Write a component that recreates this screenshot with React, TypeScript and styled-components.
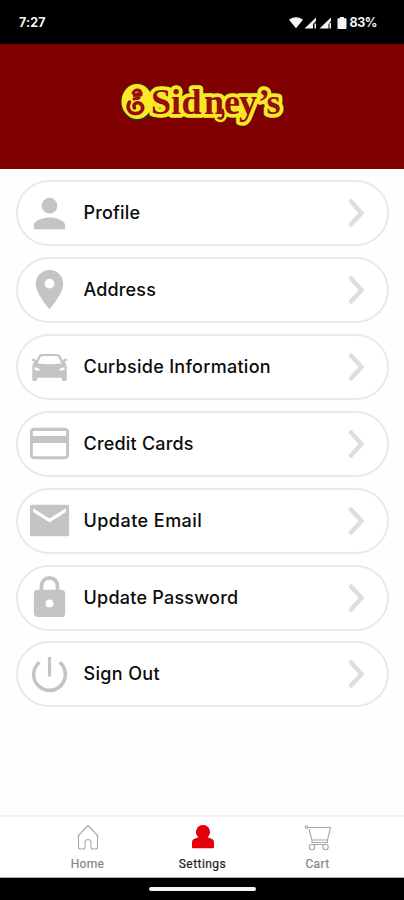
import React from "react";
import styled, { createGlobalStyle } from "styled-components";

const GlobalStyle = createGlobalStyle`
  * { box-sizing: border-box; }
  body { margin: 0; background: #fff; }
`;

const Screen = styled.div`
  display: flex;
  flex-direction: column;
  width: 404px;
  height: 900px;
  overflow: hidden;
  background: #fefefe;
  font-family: Inter, "Liberation Sans", sans-serif;
`;

const StatusBar = styled.div`
  display: flex;
  flex: none;
  align-items: center;
  justify-content: space-between;
  height: 44px;
  padding: 1px 27px 0 19px;
  background: #000;
  color: #f4f4f4;
`;

const StatusText = styled.span<{ $spacing: string }>`
  font-size: 12.5px;
  line-height: 16px;
  font-weight: 700;
  letter-spacing: ${(p) => p.$spacing};
`;

const StatusIcons = styled.div`
  display: flex;
  align-items: center;
  gap: 2px;
`;

const Header = styled.header`
  display: flex;
  flex: none;
  justify-content: center;
  height: 125px;
  padding-top: 36px;
  background: #800000;
`;

const Logo = styled.svg`
  display: block;
  width: 170px;
  height: 50px;
  font-family: "Liberation Serif", serif;
  font-weight: 700;
`;

const Menu = styled.main`
  display: flex;
  flex: 1;
  flex-direction: column;
  gap: 10.91px;
  padding: 11px 15px 0 16px;
`;

const MenuRow = styled.button`
  display: flex;
  flex: none;
  align-items: center;
  height: 66px;
  padding: 0 21px 0 8px;
  border: 2px solid #e9e9e9;
  border-radius: 33px;
  background: #fff;
  font: inherit;
  text-align: left;
`;

const RowIcon = styled.svg`
  flex: none;
  width: 47px;
  height: 47px;
  fill: #c4c4c4;
`;

const RowLabel = styled.span<{ $spacing: number }>`
  flex: 1;
  padding-left: 10.5px;
  color: #0c0c0c;
  font-size: 18px;
  line-height: 24px;
  font-weight: 500;
  white-space: nowrap;
  letter-spacing: ${(p) => p.$spacing}px;
`;

const Chevron = styled.svg`
  flex: none;
  width: 20px;
  height: 32px;
  fill: none;
  stroke: #dededc;
  stroke-width: 4.5;
  stroke-linecap: round;
`;

const TabBar = styled.nav`
  display: grid;
  flex: none;
  grid-template-columns: repeat(3, 115px);
  justify-content: center;
  height: 63px;
  border-top: 2px solid #f3f3f3;
  border-bottom: 1px solid #aaa;
  background: #fff;
`;

const Tab = styled.div<{ $active?: boolean }>`
  display: flex;
  flex-direction: column;
  align-items: center;
  padding: 6px 0 0 1px;
  color: ${(p) => (p.$active ? "#222" : "#858585")};
`;

const TabIcon = styled.svg`
  width: 28px;
  height: 28px;
  fill: none;
  stroke: #a8a8a8;
  stroke-width: 1.1;
  stroke-linejoin: round;
`;

const TabLabel = styled.span<{ $spacing: number }>`
  margin-top: 6px;
  font-family: Roboto, "Liberation Sans", sans-serif;
  font-size: 12px;
  line-height: 14px;
  font-weight: 400;
  -webkit-text-stroke: 0.2px currentColor;
  letter-spacing: ${(p) => p.$spacing}px;
`;

const GestureBar = styled.footer`
  display: flex;
  flex: none;
  justify-content: center;
  height: 22px;
  padding-top: 9px;
  background: #000;
`;

const GestureHandle = styled.div`
  width: 107px;
  height: 4px;
  border-radius: 2px;
  background: #f5f5f5;
`;

const items = [
  {
    label: "Profile",
    spacing: 0.15,
    icon: <path d="M12 12a4 4 0 1 0 0-8 4 4 0 0 0 0 8zm0 2c-2.67 0-8 1.34-8 4v2h16v-2c0-2.66-5.33-4-8-4z" />,
  },
  {
    label: "Address",
    spacing: 0.15,
    icon: <path d="M12 2a7 7 0 0 0-7 7c0 5.25 7 13 7 13s7-7.75 7-13a7 7 0 0 0-7-7zm0 9.5a2.5 2.5 0 1 1 0-5 2.5 2.5 0 0 1 0 5z" />,
  },
  {
    label: "Curbside Information",
    spacing: 0.28,
    icon: (
      <path
        fillRule="evenodd"
        d="M3 8.1c.9-.2 1.700 0 2.200.8l1-1.800c.3-.7.8-1.200 1.500-1.300 2.800-.4 5.800-.4 8.600 0 .7.1 1.200.6 1.500 1.300l1 1.800c.5-.8 1.300-1 2.200-.8v.9l-1.300.5c.8.9 1.100 2 1.100 3v6.100c0 .5-.3.800-.8.800h-.9c-.5 0-.8-.3-.8-.8v-.9H5.700v.9c0 .5-.3.800-.8.800H4c-.5 0-.8-.3-.8-.8v-6.100c0-1 .3-2.100 1.100-3L3 9zM6 10.500c4 .5 8 .5 12 0l-1.200-2.800c-.2-.5-.5-.8-.9-.9-2.600-.3-5.200-.3-7.800 0-.4.1-.7.4-.9.900zM4.200 12.600c0 .9.500 1.400 1.200 1.400h1.800c-.5-1-1.500-1.600-3-1.400zm15.600 0c-1.500-.2-2.500.4-3 1.400h1.800c.7 0 1.200-.5 1.200-1.400z"
      />
    ),
  },
  {
    label: "Credit Cards",
    spacing: 0.2,
    icon: <path d="M20 4H4c-1.1 0-2 .9-2 2v12c0 1.1.9 2 2 2h16c1.1 0 2-.9 2-2V6c0-1.1-.9-2-2-2zm.5 14.5h-17v-6.700h17zm0-10.300h-17V5.600h17z" />,
  },
  {
    label: "Update Email",
    spacing: 0.46,
    icon: <path d="M21 4H3c-.6 0-1 .4-1 1v14c0 .6.4 1 1 1h18c.6 0 1-.4 1-1V5c0-.6-.4-1-1-1zm-.7 3.600L12 13 3.700 7.600V5.800L12 11l8.300-5.200z" />,
  },
  {
    label: "Update Password",
    spacing: 0.23,
    icon: <path d="M18 8h-1V6A5 5 0 0 0 7 6v2H6a2 2 0 0 0-2 2v10c0 1.1.9 2 2 2h12a2 2 0 0 0 2-2V10a2 2 0 0 0-2-2zm-6 9a2 2 0 1 1 0-4 2 2 0 0 1 0 4zm3.100-9H8.900V6a3.100 3.100 0 0 1 6.200 0z" />,
  },
  {
    label: "Sign Out",
    spacing: 0.35,
    icon: <path d="M12.800 3h-1.600v10h1.600zm5.030 2.170-1.250 1.250A7.200 7.200 0 0 1 19.200 12a7.200 7.200 0 1 1-11.780-5.580L6.170 5.170A9 9 0 1 0 21 12a8.940 8.940 0 0 0-3.170-6.830z" />,
  },
];

const logoLetters = "34 54 64.5 87 107 122 141 149.5";
const logoTail = "M105.5 30c2 6 0 10-4 8";

function SidneysLogo() {
  return (
    <Logo viewBox="0 0 170 50">
      <g fill="none" stroke="#35320b" strokeWidth="8.5" strokeLinejoin="round">
        <ellipse cx="20.5" cy="22" rx="12.5" ry="14.5" />
        <text x={logoLetters} y="34" fontSize="36">Sidney’s</text>
      </g>
      <ellipse cx="20" cy="21.5" rx="15.5" ry="17.5" fill="#f7e928" />
      <g fill="none" stroke="#f7e928" strokeWidth="7.5" strokeLinejoin="round" strokeLinecap="round">
        <text x={logoLetters} y="33.5" fontSize="36">Sidney’s</text>
        <path d={logoTail} />
      </g>
      <text x={logoLetters} y="33.5" fontSize="36" fill="#960d10">Sidney’s</text>
      <g fill="none" stroke="#960d10" strokeLinecap="round">
        <path d={logoTail} strokeWidth="2.5" />
        <path d="M12.500 22c-3 5-1 11 5 11.500 8 .5 10-6 6.500-9.500-4-3-8.500 0-6.500 4" strokeWidth="3.500" />
        <path d="M16 13c2-4 7-4 8 0l-8 2.500 8-.5m-7 4 5-1" strokeWidth="3" />
      </g>
    </Logo>
  );
}

export default function App() {
  return (
    <>
      <GlobalStyle />
      <Screen>
        <StatusBar>
          <StatusText $spacing="0.1px">7:27</StatusText>
          <StatusIcons>
            <svg width="59" height="14" viewBox="0 0 59 14" fill="#f4f4f4">
              <path d="M0 3.800c4-3.500 10-3.500 14 0l-7 8.400zM15.500 12.500 27 1.500V5l-3 3v4.500zm10-5H27v5h-1.500zM30.500 12.500 42 1.500V5l-2.500 3v4.500zm10-5.500H42v5.500h-1.500zM51 1h4v1.200h1.500c.6 0 1 .4 1 1V12c0 .6-.4 1-1 1h-7c-.6 0-1-.4-1-1V3.200c0-.6.4-1 1-1H51z" />
            </svg>
            <StatusText $spacing="-0.5px">83%</StatusText>
          </StatusIcons>
        </StatusBar>
        <Header>
          <SidneysLogo />
        </Header>
        <Menu>
          {items.map((item) => (
            <MenuRow key={item.label}>
              <RowIcon viewBox="0 0 24 24">{item.icon}</RowIcon>
              <RowLabel $spacing={item.spacing}>{item.label}</RowLabel>
              <Chevron viewBox="0 0 20 32">
                <path d="M5 4.500 15.500 16 5 27.500" />
              </Chevron>
            </MenuRow>
          ))}
        </Menu>
        <TabBar>
          <Tab>
            <TabIcon viewBox="0 0 28 28">
              <path d="M3.500 13.500 14 2.500l10.500 11M4.500 12.500V24q0 2 2 2h2.500q2 0 2-2v-4.500q0-3 3-3t3 3V24q0 2 2 2h2.500q2 0 2-2V12.500" />
            </TabIcon>
            <TabLabel $spacing={0.3}>Home</TabLabel>
          </Tab>
          <Tab $active>
            <TabIcon viewBox="0 0 28 28">
              <path fill="#e1000b" stroke="none" d="M14 2a7 7 0 0 1 4.500 12.300l4 1.500c2 .7 2.500 2 2.500 4v4.400q0 1-1 1H4q-1 0-1-1v-4.400c0-2 .5-3.300 2.500-4l4-1.500A7 7 0 0 1 14 2z" />
            </TabIcon>
            <TabLabel $spacing={0.45}>Settings</TabLabel>
          </Tab>
          <Tab>
            <TabIcon viewBox="0 0 28 28">
              <path d="M3.500 4.500h23l-3 12.500H7.500M5 6l3 11.500v2h15.500v-2.500M8 21.500h14" />
              <circle cx="2.500" cy="4" r="1.300" />
              <circle cx="8" cy="24" r="2.700" />
              <circle cx="21.500" cy="24" r="2.700" />
            </TabIcon>
            <TabLabel $spacing={0.4}>Cart</TabLabel>
          </Tab>
        </TabBar>
        <GestureBar>
          <GestureHandle />
        </GestureBar>
      </Screen>
    </>
  );
}
